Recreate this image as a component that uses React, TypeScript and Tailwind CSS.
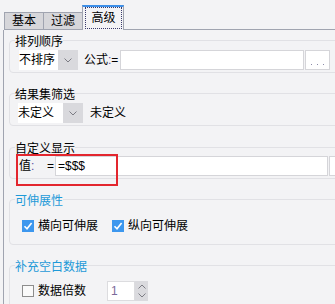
import React from 'react';

const FONT = '"Liberation Sans", "Noto Sans CJK SC", sans-serif';

function Chevron({ up = false }: { up?: boolean }) {
  return (
    <svg width="8" height="5" viewBox="0 0 8 5" className="block">
      <path d={up ? 'M0.5 4.5L4 1l3.5 3.5' : 'M0.5 0.5L4 4l3.5-3.5'} fill="none" stroke="#7c7c84" strokeWidth="1" />
    </svg>
  );
}

function Combo({ text, width }: { text: string; width: string }) {
  return (
    <div className="flex h-[20px]">
      <div className={`${width} bg-white text-[12px] leading-[20px] text-black whitespace-nowrap overflow-hidden`}>{text}</div>
      <div className="w-[20px] bg-[#d9d9dd] flex items-center justify-center">
        <Chevron />
      </div>
    </div>
  );
}

function Dots() {
  return (
    <div className="w-[25px] h-[20px] ml-px bg-white border border-[#d5d5d9] flex items-end justify-center gap-[5px] pb-[4px]">
      <span className="w-px h-px bg-[#8a8aa8]" />
      <span className="w-px h-px bg-[#8a8aa8]" />
      <span className="w-px h-px bg-[#8a8aa8]" />
    </div>
  );
}

function Check({ on }: { on: boolean }) {
  return on ? (
    <div className="w-[12px] h-[12px] bg-[#3d97ee] flex items-center justify-center">
      <svg width="12" height="12" viewBox="0 0 12 12">
        <path d="M2.5 6.2L5 8.7L9.6 3" fill="none" stroke="white" strokeWidth="1.6" />
      </svg>
    </div>
  ) : (
    <div className="w-[12px] h-[12px] bg-[#fafafa] border border-[#8d8d8d]" />
  );
}

function Group({ title, blue, className, children }: { title: string; blue?: boolean; className: string; children: React.ReactNode }) {
  return (
    <fieldset className={`ml-[5px] border border-[#e1e1e5] rounded-[4px] pl-[5px] ${className}`}>
      <legend className={`text-[12px] leading-[12px] pt-[4px] ${blue ? 'text-[#1e9ad8]' : 'text-black'}`}>{title}</legend>
      {children}
    </fieldset>
  );
}

export default function App() {
  return (
    <div className="relative w-[335px] h-[304px] overflow-hidden bg-[#f3f3f5]" style={{ fontFamily: FONT }}>
      {/* tabs */}
      <div className="flex items-end h-[30px] pl-[4px]">
        <div className="w-[40px] h-[18px] border border-[#a0a4b0] bg-[#d6d6da] flex items-center justify-center text-[12px] text-black">基本</div>
        <div className="-ml-px w-[40px] h-[18px] border border-[#a0a4b0] bg-[#d6d6da] flex items-center justify-center text-[12px] text-black">过滤</div>
        <div className="-ml-px w-[42px] h-[25px] border-t-2 border-t-[#3d8fe8] border-x border-x-[#a0a4b0] bg-[#f3f3f5] flex pl-[2px] pr-[1px] pb-[1px]">
          <div className="flex-1 border border-dotted border-[#3a3a6a] flex items-center justify-center text-[12px] text-black">高级</div>
        </div>
        <div className="flex-1 h-px bg-[#a0a4b0]" />
      </div>

      {/* panel */}
      <div className="ml-[3px] w-[345px] border-l border-[#a0a4b0] pt-[2px]">
        <Group title="排列顺序" className="pt-[2px] pb-[2px]">
          <div className="flex items-center pl-[4px]">
            <Combo text="不排序" width="w-[39px]" />
            <span className="ml-[6px] w-[36px] text-[12px] text-black whitespace-nowrap">公式<span className="text-[#5a4aa0]">:</span>=</span>
            <div className="w-[184px] h-[20px] bg-white border border-[#d5d5d9]" />
            <Dots />
          </div>
        </Group>

        <Group title="结果集筛选" className="mt-[12px] pt-[2px] pb-[2px]">
          <div className="flex items-center pl-[3px]">
            <Combo text="未定义" width="w-[45px]" />
            <span className="ml-[7px] text-[12px] text-black">未定义</span>
          </div>
        </Group>

        <Group title="自定义显示" className="mt-[13px] pt-[1px] pb-[2px]">
          <div className="flex items-center pl-[4px]">
            <span className="w-[28px] text-[12px] text-black">值<span className="text-[#5a4aa0]">:</span></span>
            <span className="w-[8px] text-[12px] text-black">=</span>
            <div className="w-[273px] h-[20px] bg-white border border-[#d5d5d9] pl-[2px] text-[12px] leading-[18px] text-black">=$$$</div>
            <div className="ml-px w-[25px] h-[20px] bg-white border border-[#d5d5d9]" />
          </div>
        </Group>

        <Group title="可伸展性" blue className="mt-[12px] pt-[9px] pb-[8px]">
          <div className="flex items-center h-[20px] pl-[7px] text-[12px] text-black">
            <Check on />
            <span className="ml-[4px]">横向可伸展</span>
            <div className="ml-[14px]">
              <Check on />
            </div>
            <span className="ml-[4px]">纵向可伸展</span>
          </div>
        </Group>

        <Group title="补充空白数据" blue className="mt-[12px] pt-[8px] pb-[8px]">
          <div className="flex items-center h-[20px] pl-[7px] text-[12px] text-black">
            <Check on={false} />
            <span className="ml-[4px]">数据倍数</span>
            <div className="ml-[21px] flex h-[20px]">
              <div className="w-[28px] bg-white border border-[#dcdcdf] pl-[3px] text-[12px] leading-[18px] text-[#7a6a9a]">1</div>
              <div className="w-[13px] bg-[#dadade] flex flex-col items-center justify-center gap-[4px]">
                <Chevron up />
                <Chevron />
              </div>
            </div>
          </div>
        </Group>
      </div>

      {/* annotation */}
      <div className="absolute left-[16px] top-[154px] w-[102px] h-[32px] border-2 border-[#e3262e]" />
    </div>
  );
}
